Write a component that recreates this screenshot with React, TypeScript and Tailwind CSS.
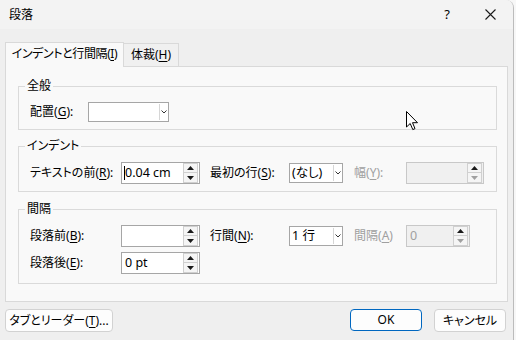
import type { ReactNode } from "react";

const font = "font-['Noto_Sans','Noto_Sans_CJK_JP',sans-serif] [font-feature-settings:'palt']";

function Acc({ pre, k, colon = true }: { pre: string; k: string; colon?: boolean }) {
  return (
    <>
      {pre}(<span className="underline underline-offset-[2px]">{k}</span>){colon ? ":" : ""}
    </>
  );
}

function Arrow({ up, muted }: { up?: boolean; muted?: boolean }) {
  return (
    <svg width="7" height="4" viewBox="0 0 7 4">
      <polygon points={up ? "0,4 3.5,0 7,4" : "0,0 3.5,4 7,0"} fill={muted ? "#a0a0a0" : "#1a1a1a"} />
    </svg>
  );
}

function Spin({ value, width, disabled, caret }: { value: string; width: string; disabled?: boolean; caret?: boolean }) {
  return (
    <div
      className={`flex h-[22px] items-stretch border ${width} ${
        disabled ? "border-[#c8c8c8] bg-[#f0f0f0] text-[#a0a0a0]" : "border-[#a6a6a6] bg-white text-black"
      }`}
    >
      <div className="flex flex-1 items-center pl-[2px] text-[12.5px]">
        {caret && <span className="h-[14px] w-px bg-black" />}
        <span className={caret ? "" : "pl-[1px]"}>{value}</span>
      </div>
      <div className="flex flex-col pr-[1px]">
        <div className="flex h-[10px] w-[15px] items-center justify-center border border-[#d0d0d0] bg-[#f5f5f5]">
          <Arrow up />
        </div>
        <div className="flex h-[10px] w-[15px] items-center justify-center border border-t-0 border-[#d0d0d0] bg-[#f5f5f5]">
          <Arrow muted={disabled} />
        </div>
      </div>
    </div>
  );
}

function Select({ value, width }: { value: string; width: string }) {
  return (
    <div className={`flex h-[20px] items-stretch border border-[#a6a6a6] bg-white ${width}`}>
      <span className="flex flex-1 items-center pl-[2px] text-[12.5px]">{value}</span>
      <span className="my-[1px] flex w-[9px] items-center justify-center border-l border-[#d6d6d6]">
        <svg width="6" height="4" viewBox="0 0 6 4">
          <polyline points="0.5,0.5 3,3 5.5,0.5" fill="none" stroke="#333" strokeWidth="1" />
        </svg>
      </span>
    </div>
  );
}

function Group({ title, children, className }: { title: string; children: ReactNode; className: string }) {
  return (
    <fieldset className={`border border-[#dadada] pl-[11px] ${className}`}>
      <legend className="-ml-[5px] px-[2px] text-[12px] leading-[16px]">{title}</legend>
      {children}
    </fieldset>
  );
}

function Label({ children, width, muted }: { children: ReactNode; width: string; muted?: boolean }) {
  return <span className={`shrink-0 text-[12px] ${width} ${muted ? "text-[#a0a0a0]" : "text-black"}`}>{children}</span>;
}

function Button({ children, className }: { children: ReactNode; className: string }) {
  return (
    <button className={`flex items-center justify-center rounded-[4px] border bg-[#fdfdfd] text-[12px] text-black ${className}`}>
      {children}
    </button>
  );
}

export default function App() {
  return (
    <div className={`relative h-[340px] w-[516px] bg-[#f7f7f7] ${font}`}>
      <div className="flex h-[340px] w-[514px] flex-col overflow-hidden rounded-tr-[8px] border-r border-[#bcbcbc] bg-[#efefef]">
        {/* Title bar */}
        <div className="flex h-[29px] shrink-0 items-center bg-[#f3f3f3] pl-[9px] text-[12px] text-black">
          <span>段落</span>
          <span className="ml-auto mr-[35px] text-[13px]">?</span>
          <svg width="11" height="11" viewBox="0 0 11 11" className="mr-[17px]">
            <path d="M0.5 0.5 L10.5 10.5 M10.5 0.5 L0.5 10.5" stroke="#1a1a1a" strokeWidth="1.1" />
          </svg>
        </div>

        <div className="flex flex-col px-[5px] pt-[13px]">
          {/* Tabs */}
          <div className="flex h-[24px] items-end">
            <div className="relative z-10 -mb-px flex h-[25px] w-[119px] items-center justify-center border border-b-0 border-[#d9d9d9] bg-[#f9f9f9] pb-[3px] text-[12px] tracking-[-0.4px]">
              <Acc pre="インデントと行間隔" k="I" colon={false} />
            </div>
            <div className="flex h-[23px] w-[55px] items-center justify-center border border-l-0 border-b-0 border-[#d9d9d9] bg-[#f0f0f0] text-[12px]">
              <Acc pre="体裁" k="H" colon={false} />
            </div>
          </div>

          {/* Panel */}
          <div className="flex h-[236px] flex-col border border-[#d9d9d9] bg-[#f9f9f9] pl-[12px] pr-[10px] pt-[11px]">
            <Group title="全般" className="pb-[7px] pt-[8px]">
              <div className="flex h-[20px] items-center">
                <Label width="w-[58px]">
                  <Acc pre="配置" k="G" />
                </Label>
                <Select value="" width="w-[81px]" />
              </div>
            </Group>

            <Group title="インデント" className="mt-[8px] pb-[7px] pt-[8px]">
              <div className="flex h-[22px] items-center">
                <Label width="w-[91px]">
                  <Acc pre="テキストの前" k="R" />
                </Label>
                <Spin value="0.04 cm" width="w-[79px]" caret />
                <Label width="ml-[10px] w-[79px]">
                  <Acc pre="最初の行" k="S" />
                </Label>
                <Select value="(なし)" width="w-[54px]" />
                <Label width="ml-[11px] w-[52px]" muted>
                  <Acc pre="幅" k="Y" />
                </Label>
                <Spin value="" width="w-[78px]" disabled />
              </div>
            </Group>

            <Group title="間隔" className="mt-[9px] pb-[9px] pt-[8px]">
              <div className="flex flex-col gap-[5px]">
                <div className="flex h-[22px] items-center">
                  <Label width="w-[91px]">
                    <Acc pre="段落前" k="B" />
                  </Label>
                  <Spin value="" width="w-[79px]" />
                  <Label width="ml-[10px] w-[79px]">
                    <Acc pre="行間" k="N" />
                  </Label>
                  <Select value="1 行" width="w-[54px]" />
                  <Label width="ml-[11px] w-[52px]" muted>
                    <Acc pre="間隔" k="A" colon={false} />
                  </Label>
                  <Spin value="0" width="w-[64px]" disabled />
                </div>
                <div className="flex h-[22px] items-center">
                  <Label width="w-[91px]">
                    <Acc pre="段落後" k="E" />
                  </Label>
                  <Spin value="0 pt" width="w-[79px]" />
                </div>
              </div>
            </Group>
          </div>

          {/* Buttons */}
          <div className="mt-[7px] flex items-start pr-[2px]">
            <Button className="h-[23px] w-[108px] border-[#d2d2d2]">
              タブとリーダー(<span className="underline underline-offset-[2px]">T</span>)...
            </Button>
            <Button className="ml-auto h-[22px] w-[72px] border-[#0067c0]">OK</Button>
            <Button className="ml-[12px] h-[23px] w-[72px] border-[#d2d2d2]">キャンセル</Button>
          </div>
        </div>
      </div>

      {/* mouse pointer */}
      <svg className="absolute left-[406px] top-[111px]" width="13" height="20" viewBox="0 0 13 20">
        <path d="M0.5 0.5 L0.5 16 L4.2 12.5 L6.8 18.6 L9 17.6 L6.5 11.7 L11.5 11.7 Z" fill="#fff" stroke="#000" strokeWidth="1" strokeLinejoin="round" />
      </svg>
    </div>
  );
}
